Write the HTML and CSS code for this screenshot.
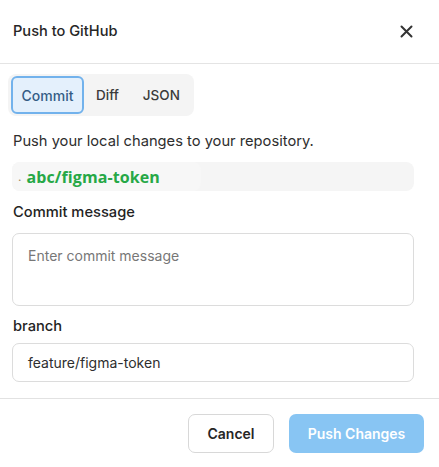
FILE: index.html
```html
<!DOCTYPE html>
<html>
<head>
<meta charset="utf-8">
<link rel="stylesheet" href="styles.css">
</head>
<body>
<div class="dialog">
  <header class="header">
    <h1 class="title">Push to GitHub</h1>
    <button class="close" aria-label="Close">
      <svg width="13" height="13" viewBox="0 0 13 13"><path d="M1.5 1.5 L11.5 11.5 M11.5 1.5 L1.5 11.5" stroke="#333" stroke-width="2" stroke-linecap="round"/></svg>
    </button>
  </header>
  <main class="content">
    <div class="tabs">
      <button class="tab active">Commit</button>
      <button class="tab">Diff</button>
      <button class="tab">JSON</button>
    </div>
    <p class="desc">Push your local changes to your repository.</p>
    <div class="repo">
      <div class="repo-inner"><span class="dot">.</span><span class="repo-name">abc/figma-token</span></div>
    </div>
    <label class="label">Commit message</label>
    <div class="textarea">Enter commit message</div>
    <label class="label branch-label">branch</label>
    <div class="input">feature/figma-token</div>
  </main>
  <footer class="footer">
    <button class="btn cancel">Cancel</button>
    <button class="btn push">Push Changes</button>
  </footer>
</div>
</body>
</html>
```
FILE: styles.css
```css
* { box-sizing: border-box; }
html, body { margin: 0; padding: 0; background: #fff; }
body { font-family: Inter, "Noto Sans", sans-serif; color: #2b2b2b; width: 439px; height: 467px; overflow: hidden; }
.dialog { width: 439px; }
.header { height: 64px; display: flex; align-items: center; justify-content: space-between; padding: 0 26px 0 13px; border-bottom: 1px solid #e4e4e4; }
.title { margin: 0; font-size: 14.6px; font-weight: 500; color: #262626; padding-bottom: 2px; }
.close { border: none; background: none; padding: 0; display: flex; margin-bottom: 1px; }
.content { padding: 10px 25px 16px 12px; }
.tabs { display: inline-flex; align-items: center; background: #f4f4f4; border-radius: 8px; padding: 2px 2px 2px 3px; margin-left: -4px; height: 42px; }
.tab { font-family: inherit; font-size: 13.5px; font-weight: 500; color: #3a3a3a; background: none; border: 2px solid transparent; border-radius: 6px; height: 38px; padding: 0 10px; }
.tab.active { background: #e4f0fc; border-color: #72b2ec; color: #355d86; width: 73px; padding: 0; font-size: 14px; }
.desc { margin: 15px 0 0 1px; font-size: 14.7px; color: #2e2e2e; line-height: 20px; }
.repo { margin-top: 11px; height: 29px; background: #f5f5f5; border-radius: 8px; display: flex; align-items: center; }
.repo-inner { height: 29px; width: 189px; background: #f7f7f7; border-radius: 8px; display: flex; align-items: center; padding-left: 6px; }
.dot { color: #a08a60; font-size: 12px; margin-right: 5px; }
.repo-name { font-family: "Open Sans", sans-serif; font-weight: 700; color: #26a846; font-size: 16px; letter-spacing: 0.1px; }
.label { display: block; margin: 11px 0 0 1px; font-size: 14.7px; font-weight: 500; color: #232323; line-height: 20px; }
.textarea { margin-top: 11px; height: 73px; border: 1px solid #dcdcdc; border-radius: 7px; padding: 13px 15px; font-size: 14px; color: #777; }
.branch-label { margin-top: 10px; }
.input { margin-top: 7px; height: 39px; border: 1px solid #dcdcdc; border-radius: 7px; padding: 0 15px; font-size: 14px; color: #2e2e2e; display: flex; align-items: center; }
.footer { border-top: 1px solid #e2e2e2; display: flex; justify-content: flex-end; gap: 15px; padding: 15px 15px 0 0; }
.btn { font-family: inherit; font-size: 14px; font-weight: 600; height: 39px; border-radius: 7px; }
.cancel { width: 86px; background: #fff; border: 1px solid #d8d8d8; color: #262626; }
.push { width: 135px; background: #88c5f3; border: none; color: #fff; }
```
